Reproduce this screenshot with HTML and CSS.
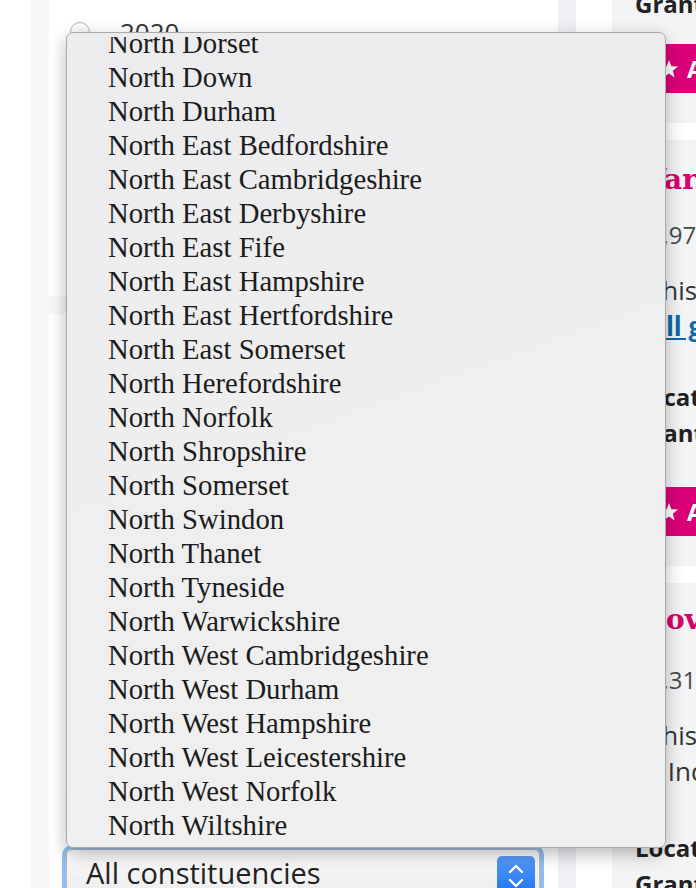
FILE: index.html
```html
<!DOCTYPE html>
<html lang="en">
<head>
<meta charset="utf-8">
<title>Constituency filter</title>
<link rel="stylesheet" href="styles.css">
</head>
<body>
<div class="page">
  <div class="edge"></div>
  <aside class="sidebar">
    <section class="panel panel-top">
      <label class="radio-row"><span class="radio"></span><span class="radio-label">2020</span></label>
    </section>
    <section class="panel panel-bottom">
      <div class="select-wrap">
        <div class="select">
          <span class="select-text">All constituencies</span>
          <span class="stepper">
            <svg width="20" height="28" viewBox="0 0 20 28"><path d="M4 10 L10 4 L16 10" fill="none" stroke="#fff" stroke-width="2.4" stroke-linecap="round" stroke-linejoin="round"/><path d="M4 18 L10 24 L16 18" fill="none" stroke="#fff" stroke-width="2.4" stroke-linecap="round" stroke-linejoin="round"/></svg>
          </span>
        </div>
      </div>
    </section>
  </aside>
  <main class="main">
    <article class="card card-1">
      <p class="label top-label">Grant type</p>
      <a class="btn"><svg class="star" width="20" height="20" viewBox="0 0 20 20"><path d="M10 1 L12.4 7.3 L19 7.6 L13.8 11.8 L15.6 18.4 L10 14.6 L4.4 18.4 L6.2 11.8 L1 7.6 L7.6 7.3 Z" fill="#fff"/></svg><span>Add</span></a>
    </article>
    <article class="card card-2">
      <h2 class="card-title">Warwick Arts</h2>
      <p class="amount">£1,970,000</p>
      <div class="desc">
        <p class="para">This grant was given to</p>
        <p class="para"><a class="link">All grants</a></p>
      </div>
      <p class="label">Location</p>
      <p class="label">Grant type</p>
      <a class="btn"><svg class="star" width="20" height="20" viewBox="0 0 20 20"><path d="M10 1 L12.4 7.3 L19 7.6 L13.8 11.8 L15.6 18.4 L10 14.6 L4.4 18.4 L6.2 11.8 L1 7.6 L7.6 7.3 Z" fill="#fff"/></svg><span>Add</span></a>
    </article>
    <article class="card card-3">
      <h2 class="card-title">Movember</h2>
      <p class="amount">£1,310,000</p>
      <div class="desc">
        <p class="para">This grant was given to</p>
        <p class="para">– Independent Living</p>
      </div>
      <p class="label">Location</p>
      <p class="label">Grant type</p>
    </article>
  </main>

  <div class="popup">
    <div class="viewport">
      <ul class="options">
        <li>North Dorset</li>
        <li>North Down</li>
        <li>North Durham</li>
        <li>North East Bedfordshire</li>
        <li>North East Cambridgeshire</li>
        <li>North East Derbyshire</li>
        <li>North East Fife</li>
        <li>North East Hampshire</li>
        <li>North East Hertfordshire</li>
        <li>North East Somerset</li>
        <li>North Herefordshire</li>
        <li>North Norfolk</li>
        <li>North Shropshire</li>
        <li>North Somerset</li>
        <li>North Swindon</li>
        <li>North Thanet</li>
        <li>North Tyneside</li>
        <li>North Warwickshire</li>
        <li>North West Cambridgeshire</li>
        <li>North West Durham</li>
        <li>North West Hampshire</li>
        <li>North West Leicestershire</li>
        <li>North West Norfolk</li>
        <li>North Wiltshire</li>
      </ul>
    </div>
  </div>
</div>
</body>
</html>
```
FILE: styles.css
```css
* { box-sizing: border-box; }
html, body { margin: 0; padding: 0; }
body {
  font-family: "Open Sans", "Liberation Sans", sans-serif;
  background: #fff;
  overflow: hidden;
}
p, h2, ul { margin: 0; padding: 0; }

.page {
  position: relative;
  display: flex;
  height: 888px;
  overflow: hidden;
}
.edge { width: 31px; flex: none; background: #fff; }

.sidebar {
  width: 545px;
  flex: none;
  background: linear-gradient(90deg, #f6f7f8, #eff0f3);
  padding: 0 18px;
  display: flex;
  flex-direction: column;
  gap: 18px;
}
.panel { background: #fff; }
.panel-top {
  height: 296px;
  padding: 19px 0 0 21px;
}
.radio-row { display: flex; align-items: center; gap: 30px; }
.radio {
  width: 20px; height: 20px;
  border-radius: 50%;
  border: 1px solid #b3b3b3;
  background: linear-gradient(#fff, #f1f1f1);
}
.radio-label { font-size: 26px; color: #333; line-height: 26px; }

.panel-bottom {
  flex: 1;
  display: flex;
  flex-direction: column;
  justify-content: flex-end;
  padding: 0 18px 0 17px;
}
.select-wrap { margin-bottom: -9px; }
.select {
  height: 48px;
  border-radius: 6px;
  box-shadow: 0 0 0 4px #93bdf0;
  background: linear-gradient(#fdfdfd, #f2f2f2 60%, #ececec);
  border: 1px solid #b9b9b9;
  display: flex;
  align-items: center;
  justify-content: space-between;
  padding: 0 4px 0 19px;
}
.select-text { font-size: 29px; color: #222; line-height: 40px; }
.stepper {
  width: 38px; height: 40px;
  border-radius: 5px;
  background: linear-gradient(#5a9cf7, #1b72f0);
  display: flex; align-items: center; justify-content: center;
  margin-top: 6px;
}

.main {
  flex: 1;
  padding-left: 36px;
  display: flex;
  flex-direction: column;
  gap: 17px;
  background: #fff;
}
.card {
  flex: none;
  background: #f3f4f6;
  padding-left: 23px;
  white-space: nowrap;
}
.card-1 { height: 123px; }
.card-2 { height: 426px; padding-top: 23px; }
.card-3 { flex: 1 0 auto; padding-top: 20px; }

.label {
  font-size: 24px;
  font-weight: 700;
  color: #222;
  line-height: 36px;
}
.top-label { margin-top: -14px; }
.btn {
  display: flex;
  align-items: center;
  gap: 8px;
  height: 49px;
  background: #dc0078;
  color: #fff;
  font-weight: 700;
  font-size: 24px;
  padding-left: 24px;
}
.card-1 .btn { margin-top: 22px; }
.card-2 .btn { margin-top: 36px; }
.card-title {
  font-family: "DejaVu Serif", "Liberation Serif", serif;
  font-weight: 700;
  font-size: 28px;
  color: #d7006f;
  line-height: 34px;
}
.amount { font-size: 24px; color: #4a4a4a; line-height: 34px; margin-top: 21px; }
.card-3 .amount { margin-top: 26px; }
.desc { padding-left: 13px; margin-top: 20px; }
.para { font-size: 26px; color: #333; line-height: 36px; }
.link { color: #0b6aa8; font-weight: 700; text-decoration: underline; }
.desc + .label { margin-top: 35px; }
.card-3 .desc + .label { margin-top: 41px; }

.popup {
  position: absolute;
  left: 66px;
  top: 32px;
  width: 600px;
  height: 816px;
  border-radius: 7px;
  border: 1px solid #a9a9a9;
  background: linear-gradient(160deg, #ecebee, #eeeeef 40%, #f0f0f0);
  box-shadow: 0 6px 18px rgba(0, 0, 0, 0.28);
  padding: 4px 0 5px;
}
.viewport { height: 100%; overflow: hidden; }
.options {
  list-style: none;
  margin-top: -11px;
  font-family: "Liberation Serif", "Times New Roman", serif;
  font-size: 28.7px;
  line-height: 34px;
  color: #1c1c1c;
}
.options li { padding-left: 41px; }
```
